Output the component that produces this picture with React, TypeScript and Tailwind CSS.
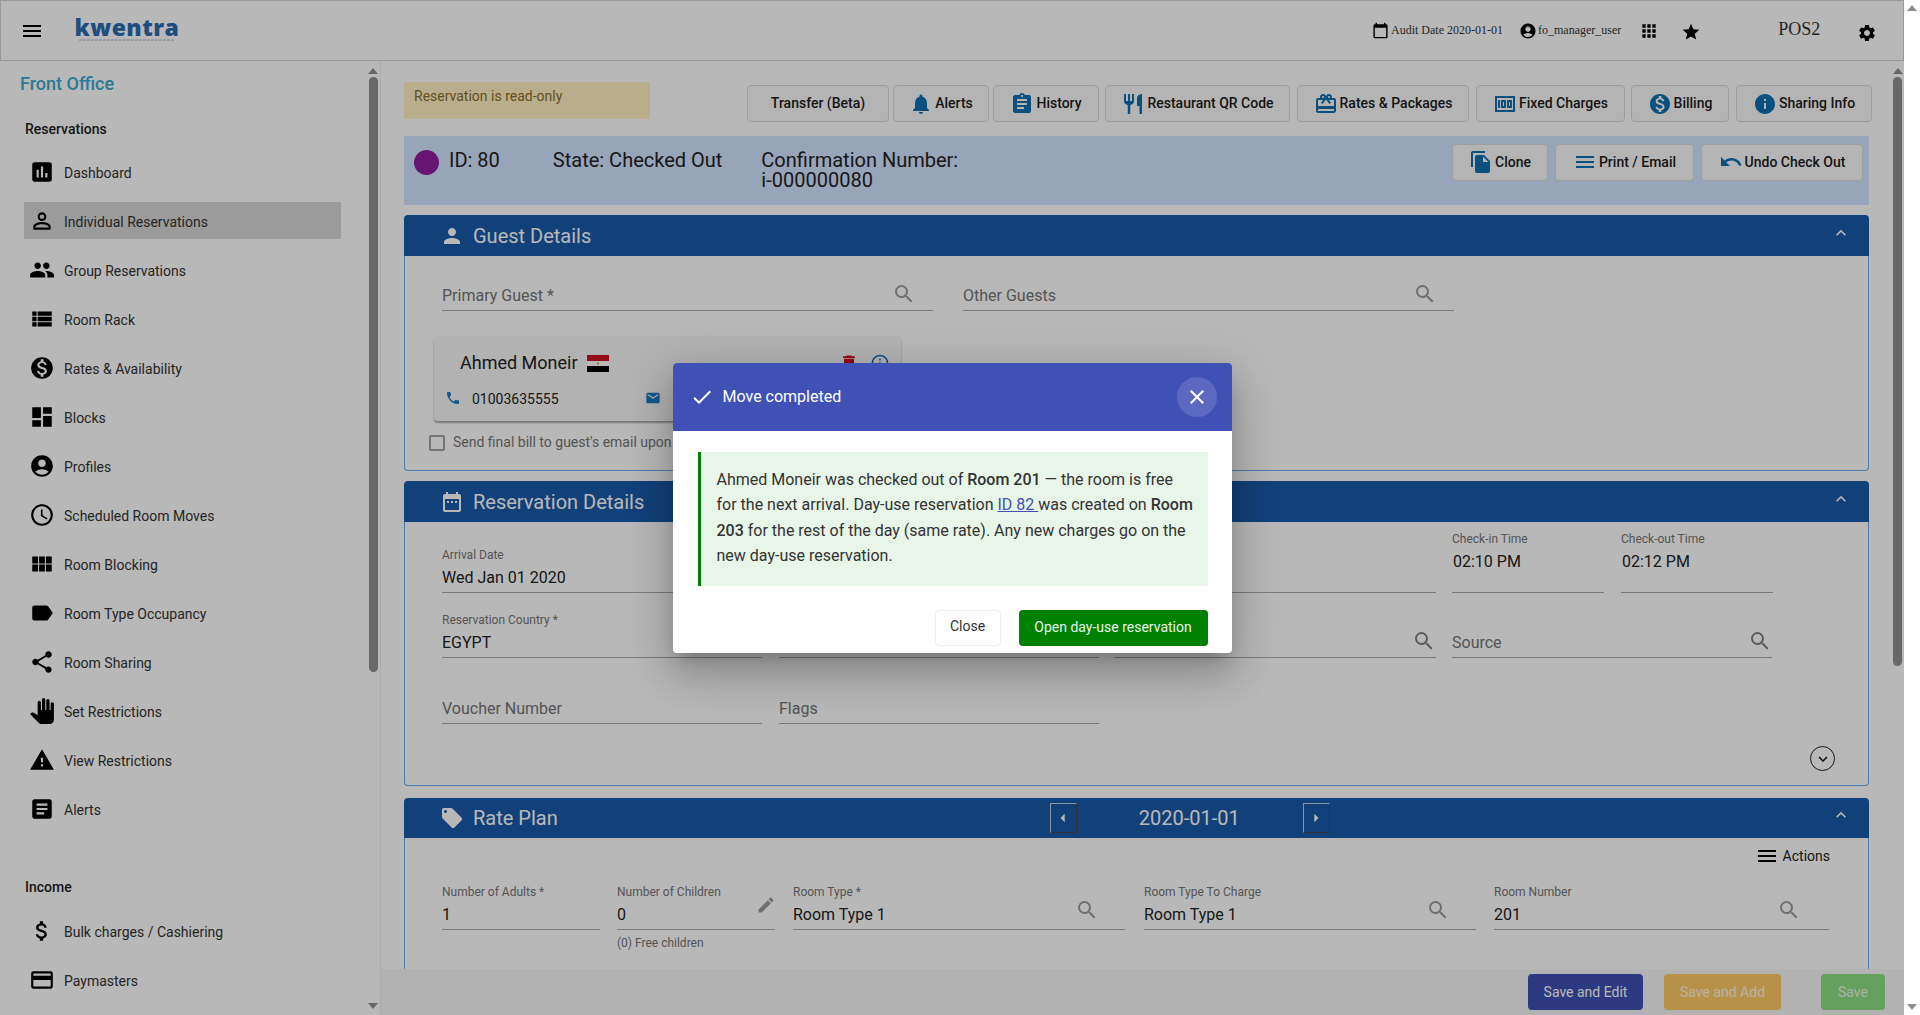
import type { ReactNode } from 'react';
import {
  MdAccessTime, MdAccountCircle, MdApps, MdArrowLeft, MdArrowRight, MdArticle, MdAssessment, MdAssignment,
  MdAttachMoney, MdCalendarToday, MdCheck, MdClose, MdCreditCard, MdDashboard, MdDateRange, MdDelete, MdEdit,
  MdEmail, MdExpandLess, MdFileCopy, MdInfo, MdInfoOutline, MdKeyboardArrowDown, MdLabel, MdLocalOffer, MdMenu,
  MdMoney, MdMonetizationOn, MdNotifications, MdPanTool, MdPeople, MdPerson, MdPersonOutline, MdPhone, MdRedeem,
  MdRestaurant, MdSearch, MdSettings, MdShare, MdStar, MdUndo, MdViewList, MdViewModule, MdWarning,
} from 'react-icons/md';

const reservationLinks = [
  { label: 'Dashboard', icon: <MdAssessment size={26} /> },
  { label: 'Individual Reservations', icon: <MdPersonOutline size={26} />, active: true },
  { label: 'Group Reservations', icon: <MdPeople size={26} /> },
  { label: 'Room Rack', icon: <MdViewList size={26} /> },
  { label: 'Rates & Availability', icon: <MdMonetizationOn size={26} /> },
  { label: 'Blocks', icon: <MdDashboard size={26} /> },
  { label: 'Profiles', icon: <MdAccountCircle size={26} /> },
  { label: 'Scheduled Room Moves', icon: <MdAccessTime size={26} /> },
  { label: 'Room Blocking', icon: <MdViewModule size={26} /> },
  { label: 'Room Type Occupancy', icon: <MdLabel size={26} /> },
  { label: 'Room Sharing', icon: <MdShare size={26} /> },
  { label: 'Set Restrictions', icon: <MdPanTool size={26} /> },
  { label: 'View Restrictions', icon: <MdWarning size={26} /> },
  { label: 'Alerts', icon: <MdArticle size={26} /> },
];

const incomeLinks = [
  { label: 'Bulk charges / Cashiering', icon: <MdAttachMoney size={26} /> },
  { label: 'Paymasters', icon: <MdCreditCard size={26} /> },
];

function NavItem({ label, icon, active }: { label: string; icon: ReactNode; active?: boolean }) {
  return (
    <div className="h-[49px] flex items-center">
      <div className={`ml-[4px] w-[317px] h-[37px] flex items-center pl-[5px] ${active ? 'bg-[#d7d7d7]' : ''}`}>
        <span className="w-[35px] text-black">{icon}</span>
        <span className="mt-[4px] text-[14px] text-[#333]">{label}</span>
      </div>
    </div>
  );
}

function Arrow({ up }: { up?: boolean }) {
  return (
    <svg width="10" height="6" viewBox="0 0 10 6" className="fill-[#8f8f8f]">
      <path d={up ? 'M5 0 L10 6 L0 6 Z' : 'M0 0 L10 0 L5 6 Z'} />
    </svg>
  );
}

function Thumb({ className }: { className: string }) {
  return <div className={`w-[9px] rounded-[5px] bg-[#919191] ${className}`} />;
}

function ActionButton({ className, icon, children }: { className: string; icon?: ReactNode; children: string }) {
  return (
    <button className={`h-[37px] flex items-center justify-center gap-[2px] rounded-[4px] border border-[#dcdcdc] bg-[#fafafa] text-[14px] font-medium text-[#1c1c1c] ${className}`}>
      {icon && <span className="text-[#0f6fb0]">{icon}</span>}
      {children}
    </button>
  );
}

function SectionHeader({ icon, title, height, children }: { icon: ReactNode; title: string; height: string; children?: ReactNode }) {
  return (
    <div className={`${height} flex items-center rounded-t-[4px] bg-[#1a5aa8] pl-[36px] pr-[18px] text-[#fff]`}>
      <span className="w-[33px]">{icon}</span>
      <span className="text-[20px]">{title}</span>
      {children}
      <MdExpandLess size={20} className="ml-auto mb-[6px]" />
    </div>
  );
}

function Field({ className, label, value, placeholder, searchClass }: { className: string; label?: string; value?: string; placeholder?: string; searchClass?: string }) {
  return (
    <div className={`relative flex flex-col justify-end border-b border-[#aaa] pb-[4px] ${className}`}>
      {label && <span className="text-[12px] leading-[14px] text-[#757575]">{label}</span>}
      {value && <span className="mt-[6px] text-[16px] leading-[20px] text-[#222]">{value}</span>}
      {placeholder && <span className="text-[16px] leading-[20px] text-[#757575]">{placeholder}</span>}
      {searchClass && <MdSearch size={24} className={`absolute text-[#9a9a9a] ${searchClass}`} />}
    </div>
  );
}

export default function App() {
  return (
    <div className="flex w-full h-[1015px] overflow-hidden bg-white font-['Roboto',sans-serif]">
      <div className="relative w-[1904px] h-full flex flex-col bg-white">
        {/* top bar */}
        <header className="h-[61px] shrink-0 flex items-center whitespace-nowrap border border-[#d5d5d5] font-['Liberation_Serif',serif] text-[#333]">
          <MdMenu size={24} className="ml-[19px] text-black" />
          <div className="ml-[28px] mb-[4px] w-[110px] flex flex-col items-center">
            <span className="font-['Open_Sans',sans-serif] text-[23px] leading-[22px] font-extrabold tracking-[0.5px] text-[#2a6cb0]">kwentra</span>
            <svg width="96" height="2" viewBox="0 0 96 2" className="mt-[1px]">
              <line x1="0" y1="1" x2="96" y2="1" stroke="#9db4d2" strokeWidth="1.2" strokeDasharray="3 1" />
            </svg>
          </div>
          <MdCalendarToday size={17} className="ml-[1190px] text-black" />
          <span className="ml-[2px] mb-[2px] text-[12px]">Audit Date 2020-01-01</span>
          <MdAccountCircle size={18} className="ml-[16px] text-black" />
          <span className="ml-[1px] mb-[2px] text-[12px]">fo_manager_user</span>
          <MdApps size={20} className="ml-[18px] text-black" />
          <MdStar size={20} className="ml-[22px] mt-[3px] text-black" />
          <span className="ml-[77px] mb-[3px] text-[18px]">POS2</span>
          <MdSettings size={20} className="ml-[37px] mt-[4px] text-black" />
        </header>

        <div className="flex-1 flex min-h-0">
          {/* sidebar */}
          <aside className="w-[381px] shrink-0 flex border-r border-[#eee]">
            <nav className="w-[367px] h-full overflow-hidden pl-[20px]">
              <div className="mt-[9px] h-[28px] text-[18px] leading-[28px] font-medium text-[#3aaad0]">Front Office</div>
              <div className="mt-[18px] ml-[5px] h-[26px] text-[14px] leading-[26px] font-medium text-[#1f1f1f]">Reservations</div>
              <div className="mt-[5px]">
                {reservationLinks.map((l) => <NavItem key={l.label} {...l} />)}
              </div>
              <div className="mt-[41px] ml-[5px] h-[26px] text-[14px] leading-[26px] font-medium text-[#1f1f1f]">Income</div>
              <div className="mt-[6px]">
                {incomeLinks.map((l) => <NavItem key={l.label} {...l} />)}
              </div>
            </nav>
            <div className="w-[12px] h-full flex flex-col items-center pt-[7px] pb-[6px]">
              <Arrow up />
              <Thumb className="mt-[3px] h-[595px]" />
              <div className="mt-auto"><Arrow /></div>
            </div>
          </aside>

          {/* main column */}
          <main className="flex-1 min-w-0 flex flex-col">
            <div className="flex-1 min-h-0 flex">
              <div className="w-[1510px] overflow-hidden pl-[23px]">
                {/* read only + top actions */}
                <div className="mt-[21px] w-[1468px] flex items-start">
                  <div className="w-[246px] h-[37px] bg-[#fff2c2] px-[10px] pt-[4px] text-[14px] leading-[20px] text-[#8a6d2a]">Reservation is read-only</div>
                  <div className="ml-auto mt-[3px] flex">
                    <ActionButton className="w-[142px]">Transfer (Beta)</ActionButton>
                    <ActionButton className="ml-[4px] w-[96px]" icon={<MdNotifications size={24} />}>Alerts</ActionButton>
                    <ActionButton className="ml-[4px] w-[106px]" icon={<MdAssignment size={24} />}>History</ActionButton>
                    <ActionButton className="ml-[6px] w-[185px]" icon={<MdRestaurant size={24} />}>Restaurant QR Code</ActionButton>
                    <ActionButton className="ml-[7px] w-[172px]" icon={<MdRedeem size={24} />}>Rates &amp; Packages</ActionButton>
                    <ActionButton className="ml-[7px] w-[149px]" icon={<MdMoney size={24} />}>Fixed Charges</ActionButton>
                    <ActionButton className="ml-[6px] w-[98px]" icon={<MdMonetizationOn size={24} />}>Billing</ActionButton>
                    <ActionButton className="ml-[7px] w-[136px]" icon={<MdInfo size={24} />}>Sharing Info</ActionButton>
                  </div>
                </div>

                {/* status bar */}
                <div className="mt-[14px] w-[1465px] h-[69px] flex bg-[#d3e4ff] text-[20px] leading-[20px] text-[#222]">
                  <div className="ml-[10px] mt-[14px] w-[25px] h-[25px] rounded-full bg-[#8f1ea0]" />
                  <div className="ml-[10px] mt-[14px]">ID: 80</div>
                  <div className="ml-[53px] mt-[14px]">State: Checked Out</div>
                  <div className="ml-[39px] mt-[14px]">Confirmation Number:<br />i-000000080</div>
                  <div className="ml-auto mr-[6px] mt-[8px] flex gap-[7px]">
                    <ActionButton className="w-[96px] pb-[2px]" icon={<MdFileCopy size={24} />}>Clone</ActionButton>
                    <ActionButton className="w-[139px] pb-[2px]" icon={<MdMenu size={24} />}>Print / Email</ActionButton>
                    <ActionButton className="w-[162px] pb-[2px]" icon={<MdUndo size={24} />}>Undo Check Out</ActionButton>
                  </div>
                </div>

                {/* guest details */}
                <section className="mt-[10px] w-[1465px]">
                  <SectionHeader height="h-[41px]" icon={<MdPerson size={24} />} title="Guest Details" />
                  <div className="h-[215px] border-x border-b border-[#67aeee] rounded-b-[4px] pl-[37px]">
                    <div className="pt-[24px] flex gap-[30px]">
                      <Field className="w-[491px] h-[31px]" placeholder="Primary Guest *" searchClass="right-[17px] bottom-[4px]" />
                      <Field className="w-[491px] h-[31px]" placeholder="Other Guests" searchClass="right-[17px] bottom-[4px]" />
                    </div>
                    <div className="-ml-[8px] mt-[25px] w-[467px] h-[85px] rounded-[4px] bg-[#f7f7f7] shadow-[0_2px_2px_rgba(0,0,0,0.35)] pl-[11px] pt-[14px]">
                      <div className="flex items-center">
                        <span className="ml-[15px] text-[18px] leading-[26px] text-[#222]">Ahmed Moneir</span>
                        <svg width="22" height="17" viewBox="0 0 22 17" className="ml-[9px]">
                          <rect width="22" height="6" fill="#ce1126" />
                          <rect y="6" width="22" height="5" fill="#fff" />
                          <rect y="11" width="22" height="6" fill="#000" />
                          <circle cx="11" cy="8.5" r="1" fill="#c09300" />
                        </svg>
                        <MdDelete size={20} className="ml-[230px] text-[#d0021b]" />
                        <MdInfoOutline size={20} className="ml-[11px] text-[#1a6cb8]" />
                      </div>
                      <div className="mt-[9px] flex items-center">
                        <MdPhone size={16} className="text-[#1a7cc0]" />
                        <span className="ml-[11px] mt-[4px] text-[14px] text-[#222]">01003635555</span>
                        <MdEmail size={16} className="ml-[86px] text-[#1a7cc0]" />
                      </div>
                    </div>
                    <label className="-ml-[13px] mt-[11px] flex items-center text-[14px] text-[#757575]">
                      <span className="w-[16px] h-[16px] rounded-[2px] border-2 border-[#a0a0a0]" />
                      <span className="ml-[8px]">Send final bill to guest's email upon</span>
                    </label>
                  </div>
                </section>

                {/* reservation details */}
                <section className="mt-[10px] w-[1465px]">
                  <SectionHeader height="h-[41px]" icon={<MdDateRange size={24} />} title="Reservation Details" />
                  <div className="relative h-[264px] border-x border-b border-[#67aeee] rounded-b-[4px] pl-[37px]">
                    <div className="pt-[9px] flex">
                      <Field className="w-[320px] h-[62px]" label="Arrival Date" value="Wed Jan 01 2020" />
                      <Field className="ml-[17px] w-[320px] h-[62px]" />
                      <Field className="ml-[15px] w-[322px] h-[62px]" />
                      <div className="ml-[16px] w-[152px] h-[62px] border-b border-[#aaa] pt-[1px]">
                        <div className="text-[12px] leading-[14px] text-[#757575]">Check-in Time</div>
                        <div className="mt-[6px] ml-[1px] text-[16px] leading-[20px] text-[#222]">02:10 PM</div>
                      </div>
                      <div className="ml-[17px] w-[152px] h-[62px] border-b border-[#aaa] pt-[1px]">
                        <div className="text-[12px] leading-[14px] text-[#757575]">Check-out Time</div>
                        <div className="mt-[6px] ml-[1px] text-[16px] leading-[20px] text-[#222]">02:12 PM</div>
                      </div>
                    </div>
                    <div className="mt-[15px] flex">
                      <Field className="w-[320px] h-[50px]" label="Reservation Country *" value="EGYPT" />
                      <Field className="ml-[17px] w-[320px] h-[50px]" />
                      <Field className="ml-[15px] w-[322px] h-[50px]" searchClass="right-[0px] bottom-[4px] text-[#808080]" />
                      <Field className="ml-[16px] w-[320px] h-[50px]" placeholder="Source" searchClass="right-[0px] bottom-[4px] text-[#808080]" />
                    </div>
                    <div className="mt-[30px] flex">
                      <Field className="w-[320px] h-[36px]" placeholder="Voucher Number" />
                      <Field className="ml-[17px] w-[320px] h-[36px]" placeholder="Flags" />
                    </div>
                    <div className="absolute right-[33px] bottom-[14px] w-[25px] h-[25px] flex items-center justify-center rounded-full border border-[#222] text-[#111]">
                      <MdKeyboardArrowDown size={18} />
                    </div>
                  </div>
                </section>

                {/* rate plan */}
                <section className="mt-[12px] w-[1465px]">
                  <SectionHeader height="h-[40px]" icon={<MdLocalOffer size={24} />} title="Rate Plan">
                    <div className="ml-[492px] flex items-center">
                      <span className="w-[27px] h-[30px] flex items-center justify-center border-l border-t border-[#fff]/70 border-b border-r border-b-[#444] border-r-[#444]"><MdArrowLeft size={20} /></span>
                      <span className="ml-[62px] text-[20px]">2020-01-01</span>
                      <span className="ml-[63px] w-[27px] h-[30px] flex items-center justify-center border-l border-t border-[#fff]/70 border-b border-r border-b-[#444] border-r-[#444]"><MdArrowRight size={20} /></span>
                    </div>
                  </SectionHeader>
                  <div className="h-[200px] border-x border-[#67aeee] pl-[37px]">
                    <div className="pt-[6px] pr-[39px] flex items-center justify-end text-[14px] text-[#222]">
                      <MdMenu size={24} className="text-black" />
                      <span className="ml-[4px] mr-[-1px] leading-[20px]">Actions</span>
                    </div>
                    <div className="mt-[15px] flex">
                      <Field className="w-[158px] h-[47px]" label="Number of Adults *" value="1" />
                      <div className="ml-[17px] w-[158px]">
                        <div className="relative">
                          <Field className="h-[47px]" label="Number of Children" value="0" />
                          <MdEdit size={20} className="absolute -right-[1px] top-[12px] text-[#9a9a9a]" />
                        </div>
                        <div className="mt-[6px] text-[12px] leading-[14px] text-[#757575]">(0) Free children</div>
                      </div>
                      <Field className="ml-[18px] w-[332px] h-[47px]" label="Room Type *" value="Room Type 1" searchClass="right-[26px] bottom-[7px]" />
                      <Field className="ml-[19px] w-[332px] h-[47px]" label="Room Type To Charge" value="Room Type 1" searchClass="right-[26px] bottom-[7px]" />
                      <Field className="ml-[18px] w-[335px] h-[47px]" label="Room Number" value="201" searchClass="right-[28px] bottom-[7px]" />
                    </div>
                  </div>
                </section>
              </div>
              <div className="ml-auto mr-[2px] w-[9px] flex flex-col items-center pt-[7px]">
                <Arrow up />
                <Thumb className="mt-[3px] h-[589px]" />
              </div>
            </div>

            {/* save bar */}
            <footer className="h-[46px] shrink-0 flex justify-end bg-[#f7f7f7] pt-[5px] pr-[19px] text-[14px]">
              <button className="w-[115px] h-[36px] rounded-[4px] bg-[#3f51b5] text-white">Save and Edit</button>
              <button className="ml-[21px] w-[117px] h-[36px] rounded-[4px] bg-[#ffc966] text-white/80">Save and Add</button>
              <button className="ml-[40px] w-[64px] h-[36px] rounded-[4px] bg-[#8cde84] text-white/80">Save</button>
            </footer>
          </main>
        </div>

        {/* dialog backdrop */}
        <div className="absolute inset-0 flex items-center justify-center bg-black/[0.28]">
          <div className="w-[559px] h-[290px] rounded-[4px] bg-white shadow-[0_11px_15px_-7px_rgba(0,0,0,0.2),0_24px_38px_3px_rgba(0,0,0,0.14),0_9px_46px_8px_rgba(0,0,0,0.12)] overflow-hidden">
            <div className="h-[68px] flex items-center bg-[#3f51b5] pl-[17px] pr-[15px] text-white">
              <MdCheck size={24} />
              <span className="ml-[9px] text-[16px]">Move completed</span>
              <button className="ml-auto w-[40px] h-[40px] flex items-center justify-center rounded-full bg-white/15">
                <MdClose size={24} />
              </button>
            </div>
            <div className="ml-[25px] mr-[24px] mt-[21px] h-[134px] border-l-[3px] border-[#008000] bg-[#e8f5e9] pl-[16px] pr-[12px] pt-[15px] text-[16px] leading-[25.5px] text-[#333]">
              Ahmed Moneir was checked out of <b className="font-medium">Room 201</b> — the room is free for the next arrival. Day-use reservation <a className="text-[#3f51b5] underline">ID 82&nbsp;</a>was created on <b className="font-medium">Room 203</b> for the rest of the day (same rate). Any new charges go on the new day-use reservation.
            </div>
            <div className="mt-[24px] mr-[24px] flex justify-end gap-[18px] text-[14px]">
              <button className="w-[66px] h-[36px] rounded-[4px] border border-[#eee] pb-[2px] text-[#333]">Close</button>
              <button className="w-[189px] h-[36px] rounded-[4px] bg-[#008000] text-[#e8f5e9]">Open day-use reservation</button>
            </div>
          </div>
        </div>
      </div>

      {/* page scrollbar */}
      <div className="w-[16px] h-full flex flex-col items-center justify-between bg-white py-[5px]">
        <Arrow up />
        <Arrow />
      </div>
    </div>
  );
}
